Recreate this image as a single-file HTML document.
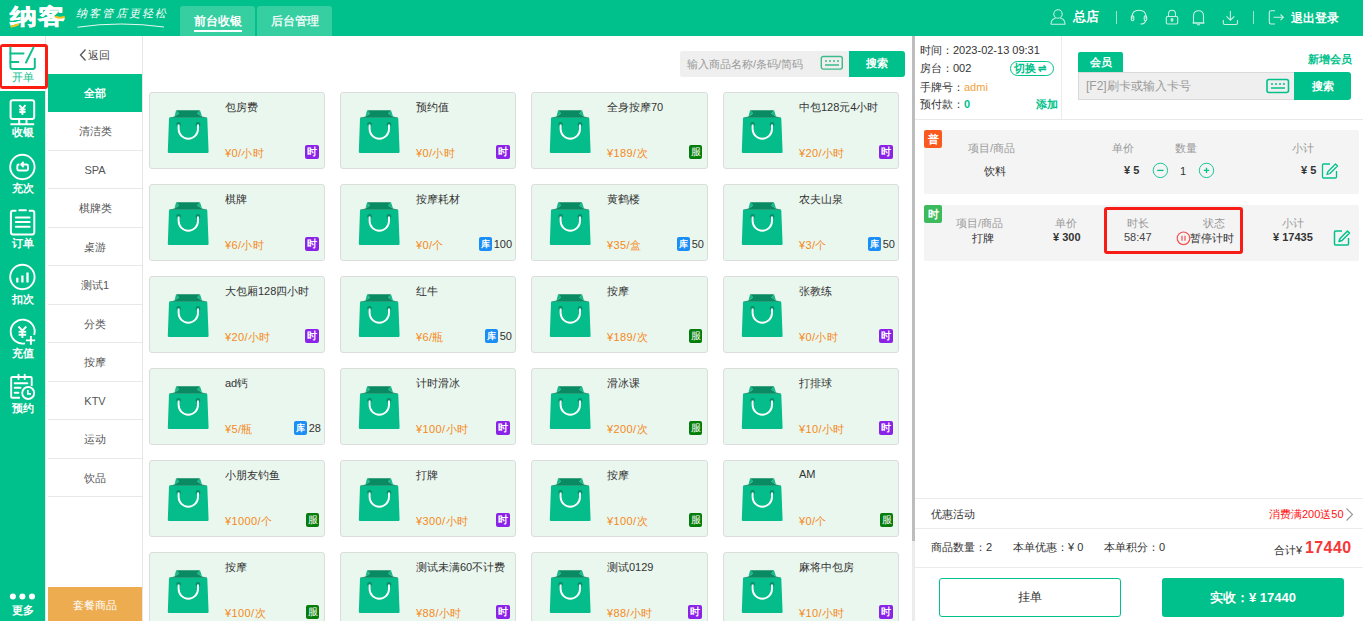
<!DOCTYPE html>
<html><head><meta charset="utf-8"><style>
*{margin:0;padding:0;box-sizing:border-box}
html,body{width:1363px;height:621px;overflow:hidden;background:#fff;font-family:"Liberation Sans",sans-serif;color:#333}
.a{position:absolute}
#hdr{position:absolute;left:0;top:0;width:1363px;height:36px;background:#00c18b}
.tab{position:absolute;top:6px;height:30px;width:75px;background:#36cfa2;border-radius:3px 3px 0 0;color:#fff;font-size:12px;text-align:center;line-height:30px}
#nav{position:absolute;left:0;top:91px;width:45px;height:530px;background:#00c18b}
.ni{position:absolute;left:0;width:45px;color:#fff;font-size:11px;text-align:center;font-weight:bold}
#catcol{position:absolute;left:45px;top:36px;width:98px;height:585px;background:#fff;border-left:1.5px solid #e6e6e6;border-right:1px solid #e6e6e6}
.cat{position:absolute;left:48px;width:94px;height:38.5px;border-bottom:1px solid #e8e8e8;font-size:11px;color:#555;text-align:center;line-height:38px}
.card{position:absolute;width:176px;height:77px;background:#eaf7ee;border:1px solid #dcdcdc;border-radius:3px}
.bag{position:absolute;left:14px;top:13px}
.pn{position:absolute;left:75px;top:7px;font-size:11px;color:#333;white-space:nowrap}
.pp{position:absolute;left:75px;top:53px;font-size:11px;color:#f5891b;white-space:nowrap;letter-spacing:0.4px}
.tag{display:inline-block;width:14px;height:14px;border-radius:2px;color:#fff;font-size:10px;line-height:14px;text-align:center;font-weight:bold}
.card>.tag{position:absolute;right:5px;top:52px}
.tp{background:#8b22e8} .tg{background:#067d0b;font-weight:normal;width:13px} .tb{background:#1b8ef5}
.stk{position:absolute;right:3px;top:52px;font-size:11px;color:#333;line-height:15px;white-space:nowrap}
.stk .tag{margin-right:2px;vertical-align:top;width:13px;font-size:9px}
#rp{position:absolute;left:912px;top:36px;width:451px;height:585px;background:#fff}
.t11{font-size:11px;white-space:nowrap}
</style></head><body>
<div id="hdr">
  <div class="a" style="left:10px;top:3px;font-size:24px;line-height:28px;font-weight:bold;color:#fff;letter-spacing:1px;transform:scale(1.1,0.9);transform-origin:0 50%;-webkit-text-stroke:0.6px #fff">纳客</div>
  <svg class="a" style="left:0;top:0" width="180" height="36"><path d="M11.5 26.5Q15 26 18 24.5" stroke="#f6c21c" stroke-width="2" fill="none" stroke-linecap="round"/><path d="M56 17Q60 18.5 64 17" stroke="#f6c21c" stroke-width="2" fill="none" stroke-linecap="round"/><path d="M77.5 27.2Q120 21 164 27" stroke="#e6f7ef" stroke-width="1.1" fill="none"/></svg>
  <div class="a" style="left:76px;top:6px;font-size:11px;color:#fff;font-family:'Liberation Serif',serif;letter-spacing:2.2px;font-style:italic">纳客管店更轻松</div>
  <div class="tab" style="left:180px;font-weight:bold">前台收银<div class="a" style="left:14px;top:24px;width:48px;height:1.6px;background:#fff"></div></div>
  <div class="tab" style="left:257px;-webkit-text-stroke:0.25px #fff">后台管理</div>
  <svg class="a" style="left:1048px;top:8px" width="20" height="18" viewBox="1048 8 20 18"><g fill="none" stroke="#c9f1e2" stroke-width="1.1"><circle cx="1058" cy="14" r="4.2"/><path d="M1051 24.3Q1051 18.8 1055.6 18.2M1060.4 18.2Q1065 18.8 1065 24.3H1051"/></g></svg>
  <div class="a" style="left:1073px;top:8px;font-size:13px;color:#fff;font-weight:bold">总店</div>
  <div class="a" style="left:1116px;top:11px;width:1px;height:13px;background:#9ee3c9"></div>
  <svg class="a" style="left:1128px;top:8px" width="22" height="18" viewBox="1128 8 22 18"><g fill="none" stroke="#c9f1e2" stroke-width="1.1"><path d="M1132 19V17Q1132 10.2 1139 10.2Q1146 10.2 1146 17V19"/><rect x="1131.3" y="15.8" width="2.5" height="5" rx="1.2"/><rect x="1144.2" y="15.8" width="2.5" height="5" rx="1.2"/><path d="M1145.5 20.8Q1145 24 1140.5 24"/></g></svg>
  <svg class="a" style="left:1163px;top:8px" width="18" height="18" viewBox="1163 8 18 18"><g fill="none" stroke="#c9f1e2" stroke-width="1.1"><path d="M1168.5 16.5V14Q1168.5 10.2 1172 10.2Q1175.5 10.2 1175.5 14V16.5"/><rect x="1166.3" y="16.5" width="11.4" height="7.5" rx="1.2"/><circle cx="1172" cy="19.6" r="1"/><path d="M1172 20.6V22"/></g></svg>
  <svg class="a" style="left:1190px;top:8px" width="18" height="18" viewBox="1190 8 18 18"><g fill="none" stroke="#c9f1e2" stroke-width="1.1"><path d="M1193.5 23V16Q1193.5 10.8 1198.5 10.8Q1203.5 10.8 1203.5 16V23Z"/><path d="M1192.5 23H1204.5M1197 24.4Q1198.5 25.6 1200 24.4"/></g></svg>
  <svg class="a" style="left:1220px;top:8px" width="20" height="18" viewBox="1220 8 20 18"><g fill="none" stroke="#c9f1e2" stroke-width="1.1"><path d="M1230.4 11V20M1226.5 16.3L1230.4 20.2L1234.3 16.3M1223.3 20V23Q1223.3 24.5 1224.8 24.5H1236Q1237.5 24.5 1237.5 23V20"/></g></svg>
  <div class="a" style="left:1253px;top:11px;width:1px;height:13px;background:#9ee3c9"></div>
  <svg class="a" style="left:1266px;top:8px" width="20" height="18" viewBox="1266 8 20 18"><g fill="none" stroke="#c9f1e2" stroke-width="1.1"><path d="M1275 10.8H1271Q1269.3 10.8 1269.3 12.5V22.3Q1269.3 24 1271 24H1275"/><path d="M1273.5 17.3H1283.3M1280.5 14.5L1283.3 17.3L1280.5 20.1"/></g></svg>
  <div class="a" style="left:1291px;top:10px;font-size:12px;color:#fff;font-weight:bold">退出登录</div>
</div>
<div id="nav"></div>
<div class="a" style="left:0;top:44px;width:48px;height:45px;background:#fff;border:3px solid #fb1d12;border-left-width:2.5px;border-radius:3px;z-index:5"></div>
<svg class="a" style="left:0;top:40px;z-index:6" width="45" height="35" viewBox="0 40 45 35"><g fill="none" stroke="#0fbf8c" stroke-width="2" stroke-linecap="round" stroke-linejoin="round"><path d="M10.4 47.5V67Q10.4 69 12.4 69H32.8Q34.8 69 34.8 67V58.8"/><path d="M10.4 53.4H23.5M10.4 62H18.3M33.4 47.6L26 62.5"/></g></svg>
<div class="ni" style="top:70px;color:#0fbf8c;z-index:6;font-weight:normal">开单</div>
<svg class="a" style="left:0;top:95px" width="45" height="32" viewBox="0 95 45 32"><g fill="none" stroke="#fff" stroke-width="2"><rect x="10.6" y="100.2" width="23.6" height="18.8" rx="2.2"/><path d="M19.2 119.5V124M26.5 119.5V124M10.4 124.2H34.2"/><path d="M19.3 105.2L22.4 108.6L25.5 105.2M22.4 108.6V114.8M19.3 109.4H25.5M19.3 112H25.5" stroke-width="2"/></g></svg>
<div class="ni" style="top:125px">收银</div>
<svg class="a" style="left:0;top:150px" width="45" height="32" viewBox="0 150 45 32"><g fill="none" stroke="#fff" stroke-width="1.9"><circle cx="22.4" cy="167" r="12.2"/><path d="M19.4 164.5H18.8Q17.3 164.5 17.3 166V169Q17.3 170.5 18.8 170.5H26.5Q28 170.5 28 169V166Q28 164.5 26.5 164.5H21.6M23.6 161.9L21.2 164.5L23.6 167.1" stroke-width="1.9" stroke-linejoin="round"/></g></svg>
<div class="ni" style="top:181px">充次</div>
<svg class="a" style="left:0;top:205px" width="45" height="32" viewBox="0 205 45 32"><g fill="none" stroke="#fff" stroke-width="2"><path d="M16.4 210.8H13Q10.9 210.8 10.9 212.9V232.3Q10.9 234.4 13 234.4H32.2Q34.3 234.4 34.3 232.3V212.9Q34.3 210.8 32.2 210.8H28.8"/><path d="M19.3 210.2H25.9M15.8 217.4H29.6M15.8 222H29.6M15.8 226.7H29.6" stroke-linecap="round"/></g></svg>
<div class="ni" style="top:236px">订单</div>
<svg class="a" style="left:0;top:260px" width="45" height="32" viewBox="0 260 45 32"><g fill="none" stroke="#fff"><circle cx="22.4" cy="277" r="12.2" stroke-width="1.9"/><path d="M17.3 277.8V282.4M22.4 275.5V282.4M27.5 272.4V282.4" stroke-width="2.3"/></g></svg>
<div class="ni" style="top:292px">扣次</div>
<svg class="a" style="left:0;top:315px" width="45" height="32" viewBox="0 315 45 32"><g fill="none" stroke="#fff" stroke-width="1.9"><path d="M25 343.4A12 12 0 1 1 34.2 335"/><path d="M18.5 326.5L22.4 330.6L26.3 326.5M22.4 330.6V338M18.6 331.8H26.2M18.6 334.7H26.2M25.9 340.4H35.2M30.9 335.9V344.8"/></g></svg>
<div class="ni" style="top:346px">充值</div>
<svg class="a" style="left:0;top:370px" width="45" height="32" viewBox="0 370 45 32"><g fill="none" stroke="#fff" stroke-width="1.9"><path d="M20 397.8H12.2Q11.2 397.8 11.2 396.8V378Q11.2 377 12.2 377H30.7Q31.7 377 31.7 378V386"/><path d="M18.5 374.6V379M24.7 374.6V379M14.7 383.2H27.4M14.7 387.8H20.5M14.7 392.8H18.5" stroke-linecap="round"/><circle cx="28.2" cy="393" r="6"/><path d="M27.8 390V393.8H31" stroke-width="1.7"/></g></svg>
<div class="ni" style="top:400.5px">预约</div>
<svg class="a" style="left:0;top:590px" width="45" height="12"><circle cx="12.9" cy="6.5" r="3" fill="#fff"/><circle cx="22.4" cy="6.5" r="3" fill="#fff"/><circle cx="32" cy="6.5" r="3" fill="#fff"/></svg>
<div class="ni" style="top:603px">更多</div>
<div id="catcol"></div>
<svg class="a" style="left:78px;top:48px" width="10" height="14"><path d="M7.5 1.5L2.5 7L7.5 12.5" fill="none" stroke="#555" stroke-width="1.3"/></svg><div class="a t11" style="left:88px;top:48px;color:#444">返回</div>
<div class="a" style="left:48px;top:74px;width:94px;height:38px;background:#00c18b;color:#fff;font-size:11px;text-align:center;line-height:38px;font-weight:bold">全部</div>
<div class="cat" style="top:112.00px">清洁类</div><div class="cat" style="top:150.53px">SPA</div><div class="cat" style="top:189.06px">棋牌类</div><div class="cat" style="top:227.59px">桌游</div><div class="cat" style="top:266.12px">测试1</div><div class="cat" style="top:304.65px">分类</div><div class="cat" style="top:343.18px">按摩</div><div class="cat" style="top:381.71px">KTV</div><div class="cat" style="top:420.24px">运动</div><div class="cat" style="top:458.77px">饮品</div>
<div class="a" style="left:48px;top:587px;width:94px;height:34px;background:#edac50;color:#fff;font-size:11px;text-align:center;line-height:36px">套餐商品</div>
<div class="a" style="left:680px;top:51px;width:169px;height:26px;background:#efefef;border-radius:2px 0 0 2px"></div>
<div class="a t11" style="left:687px;top:57px;color:#999">输入商品名称/条码/简码</div>
<svg class="a" style="left:820px;top:55px" width="24" height="16" viewBox="0 0 24 16"><rect x="1.3" y="1.5" width="21" height="12.6" rx="2" fill="none" stroke="#3dbb8c" stroke-width="1.4"/><path d="M5 6h2M9 6h2M13 6h2M17 6h2M5 10h14" stroke="#3dbb8c" stroke-width="1.3"/></svg>
<div class="a" style="left:849px;top:51px;width:56px;height:26px;background:#00c18b;border-radius:0 3px 3px 0;color:#fff;font-size:11px;text-align:center;line-height:25px;font-weight:bold">搜索</div>
<div class="card" style="left:149px;top:92px;width:176px"><svg class="bag" width="48" height="52" viewBox="0 0 48 52"><path d="M6 11.6H42.3Q43.3 11.6 43.3 12.7L44.6 45.7Q44.6 46.9 43.4 46.9H5Q3.8 46.9 3.8 45.7L5 12.7Q5 11.6 6 11.6Z" fill="#05bd8a"/><path d="M12.1 4.2H36L33.3 7.5L38 10.5L43.5 11.8H4.7L10.5 10.5L15 7.5Z" fill="#0a8a62"/><path d="M12.1 4.2L15 7.5L10.5 10.5Z M36 4.2L33.3 7.5L38 10.5Z" fill="#10b987"/><circle cx="14.6" cy="18.2" r="2.3" fill="#078f68"/><circle cx="34" cy="18.2" r="2.3" fill="#078f68"/><path d="M14.6 18.5V23A9.7 9.7 0 0 0 34 23V18.5" fill="none" stroke="#fff" stroke-width="1.9"/></svg><div class="pn">包房费</div><div class="pp">¥0/小时</div><span class="tag tp">时</span></div><div class="card" style="left:340px;top:92px;width:176px"><svg class="bag" width="48" height="52" viewBox="0 0 48 52"><path d="M6 11.6H42.3Q43.3 11.6 43.3 12.7L44.6 45.7Q44.6 46.9 43.4 46.9H5Q3.8 46.9 3.8 45.7L5 12.7Q5 11.6 6 11.6Z" fill="#05bd8a"/><path d="M12.1 4.2H36L33.3 7.5L38 10.5L43.5 11.8H4.7L10.5 10.5L15 7.5Z" fill="#0a8a62"/><path d="M12.1 4.2L15 7.5L10.5 10.5Z M36 4.2L33.3 7.5L38 10.5Z" fill="#10b987"/><circle cx="14.6" cy="18.2" r="2.3" fill="#078f68"/><circle cx="34" cy="18.2" r="2.3" fill="#078f68"/><path d="M14.6 18.5V23A9.7 9.7 0 0 0 34 23V18.5" fill="none" stroke="#fff" stroke-width="1.9"/></svg><div class="pn">预约值</div><div class="pp">¥0/小时</div><span class="tag tp">时</span></div><div class="card" style="left:531px;top:92px;width:177px"><svg class="bag" width="48" height="52" viewBox="0 0 48 52"><path d="M6 11.6H42.3Q43.3 11.6 43.3 12.7L44.6 45.7Q44.6 46.9 43.4 46.9H5Q3.8 46.9 3.8 45.7L5 12.7Q5 11.6 6 11.6Z" fill="#05bd8a"/><path d="M12.1 4.2H36L33.3 7.5L38 10.5L43.5 11.8H4.7L10.5 10.5L15 7.5Z" fill="#0a8a62"/><path d="M12.1 4.2L15 7.5L10.5 10.5Z M36 4.2L33.3 7.5L38 10.5Z" fill="#10b987"/><circle cx="14.6" cy="18.2" r="2.3" fill="#078f68"/><circle cx="34" cy="18.2" r="2.3" fill="#078f68"/><path d="M14.6 18.5V23A9.7 9.7 0 0 0 34 23V18.5" fill="none" stroke="#fff" stroke-width="1.9"/></svg><div class="pn">全身按摩70</div><div class="pp">¥189/次</div><span class="tag tg">服</span></div><div class="card" style="left:723px;top:92px;width:176px"><svg class="bag" width="48" height="52" viewBox="0 0 48 52"><path d="M6 11.6H42.3Q43.3 11.6 43.3 12.7L44.6 45.7Q44.6 46.9 43.4 46.9H5Q3.8 46.9 3.8 45.7L5 12.7Q5 11.6 6 11.6Z" fill="#05bd8a"/><path d="M12.1 4.2H36L33.3 7.5L38 10.5L43.5 11.8H4.7L10.5 10.5L15 7.5Z" fill="#0a8a62"/><path d="M12.1 4.2L15 7.5L10.5 10.5Z M36 4.2L33.3 7.5L38 10.5Z" fill="#10b987"/><circle cx="14.6" cy="18.2" r="2.3" fill="#078f68"/><circle cx="34" cy="18.2" r="2.3" fill="#078f68"/><path d="M14.6 18.5V23A9.7 9.7 0 0 0 34 23V18.5" fill="none" stroke="#fff" stroke-width="1.9"/></svg><div class="pn">中包128元4小时</div><div class="pp">¥20/小时</div><span class="tag tp">时</span></div><div class="card" style="left:149px;top:184px;width:176px"><svg class="bag" width="48" height="52" viewBox="0 0 48 52"><path d="M6 11.6H42.3Q43.3 11.6 43.3 12.7L44.6 45.7Q44.6 46.9 43.4 46.9H5Q3.8 46.9 3.8 45.7L5 12.7Q5 11.6 6 11.6Z" fill="#05bd8a"/><path d="M12.1 4.2H36L33.3 7.5L38 10.5L43.5 11.8H4.7L10.5 10.5L15 7.5Z" fill="#0a8a62"/><path d="M12.1 4.2L15 7.5L10.5 10.5Z M36 4.2L33.3 7.5L38 10.5Z" fill="#10b987"/><circle cx="14.6" cy="18.2" r="2.3" fill="#078f68"/><circle cx="34" cy="18.2" r="2.3" fill="#078f68"/><path d="M14.6 18.5V23A9.7 9.7 0 0 0 34 23V18.5" fill="none" stroke="#fff" stroke-width="1.9"/></svg><div class="pn">棋牌</div><div class="pp">¥6/小时</div><span class="tag tp">时</span></div><div class="card" style="left:340px;top:184px;width:176px"><svg class="bag" width="48" height="52" viewBox="0 0 48 52"><path d="M6 11.6H42.3Q43.3 11.6 43.3 12.7L44.6 45.7Q44.6 46.9 43.4 46.9H5Q3.8 46.9 3.8 45.7L5 12.7Q5 11.6 6 11.6Z" fill="#05bd8a"/><path d="M12.1 4.2H36L33.3 7.5L38 10.5L43.5 11.8H4.7L10.5 10.5L15 7.5Z" fill="#0a8a62"/><path d="M12.1 4.2L15 7.5L10.5 10.5Z M36 4.2L33.3 7.5L38 10.5Z" fill="#10b987"/><circle cx="14.6" cy="18.2" r="2.3" fill="#078f68"/><circle cx="34" cy="18.2" r="2.3" fill="#078f68"/><path d="M14.6 18.5V23A9.7 9.7 0 0 0 34 23V18.5" fill="none" stroke="#fff" stroke-width="1.9"/></svg><div class="pn">按摩耗材</div><div class="pp">¥0/个</div><span class="stk"><span class="tag tb">库</span>100</span></div><div class="card" style="left:531px;top:184px;width:177px"><svg class="bag" width="48" height="52" viewBox="0 0 48 52"><path d="M6 11.6H42.3Q43.3 11.6 43.3 12.7L44.6 45.7Q44.6 46.9 43.4 46.9H5Q3.8 46.9 3.8 45.7L5 12.7Q5 11.6 6 11.6Z" fill="#05bd8a"/><path d="M12.1 4.2H36L33.3 7.5L38 10.5L43.5 11.8H4.7L10.5 10.5L15 7.5Z" fill="#0a8a62"/><path d="M12.1 4.2L15 7.5L10.5 10.5Z M36 4.2L33.3 7.5L38 10.5Z" fill="#10b987"/><circle cx="14.6" cy="18.2" r="2.3" fill="#078f68"/><circle cx="34" cy="18.2" r="2.3" fill="#078f68"/><path d="M14.6 18.5V23A9.7 9.7 0 0 0 34 23V18.5" fill="none" stroke="#fff" stroke-width="1.9"/></svg><div class="pn">黄鹤楼</div><div class="pp">¥35/盒</div><span class="stk"><span class="tag tb">库</span>50</span></div><div class="card" style="left:723px;top:184px;width:176px"><svg class="bag" width="48" height="52" viewBox="0 0 48 52"><path d="M6 11.6H42.3Q43.3 11.6 43.3 12.7L44.6 45.7Q44.6 46.9 43.4 46.9H5Q3.8 46.9 3.8 45.7L5 12.7Q5 11.6 6 11.6Z" fill="#05bd8a"/><path d="M12.1 4.2H36L33.3 7.5L38 10.5L43.5 11.8H4.7L10.5 10.5L15 7.5Z" fill="#0a8a62"/><path d="M12.1 4.2L15 7.5L10.5 10.5Z M36 4.2L33.3 7.5L38 10.5Z" fill="#10b987"/><circle cx="14.6" cy="18.2" r="2.3" fill="#078f68"/><circle cx="34" cy="18.2" r="2.3" fill="#078f68"/><path d="M14.6 18.5V23A9.7 9.7 0 0 0 34 23V18.5" fill="none" stroke="#fff" stroke-width="1.9"/></svg><div class="pn">农夫山泉</div><div class="pp">¥3/个</div><span class="stk"><span class="tag tb">库</span>50</span></div><div class="card" style="left:149px;top:276px;width:176px"><svg class="bag" width="48" height="52" viewBox="0 0 48 52"><path d="M6 11.6H42.3Q43.3 11.6 43.3 12.7L44.6 45.7Q44.6 46.9 43.4 46.9H5Q3.8 46.9 3.8 45.7L5 12.7Q5 11.6 6 11.6Z" fill="#05bd8a"/><path d="M12.1 4.2H36L33.3 7.5L38 10.5L43.5 11.8H4.7L10.5 10.5L15 7.5Z" fill="#0a8a62"/><path d="M12.1 4.2L15 7.5L10.5 10.5Z M36 4.2L33.3 7.5L38 10.5Z" fill="#10b987"/><circle cx="14.6" cy="18.2" r="2.3" fill="#078f68"/><circle cx="34" cy="18.2" r="2.3" fill="#078f68"/><path d="M14.6 18.5V23A9.7 9.7 0 0 0 34 23V18.5" fill="none" stroke="#fff" stroke-width="1.9"/></svg><div class="pn">大包厢128四小时</div><div class="pp">¥20/小时</div><span class="tag tp">时</span></div><div class="card" style="left:340px;top:276px;width:176px"><svg class="bag" width="48" height="52" viewBox="0 0 48 52"><path d="M6 11.6H42.3Q43.3 11.6 43.3 12.7L44.6 45.7Q44.6 46.9 43.4 46.9H5Q3.8 46.9 3.8 45.7L5 12.7Q5 11.6 6 11.6Z" fill="#05bd8a"/><path d="M12.1 4.2H36L33.3 7.5L38 10.5L43.5 11.8H4.7L10.5 10.5L15 7.5Z" fill="#0a8a62"/><path d="M12.1 4.2L15 7.5L10.5 10.5Z M36 4.2L33.3 7.5L38 10.5Z" fill="#10b987"/><circle cx="14.6" cy="18.2" r="2.3" fill="#078f68"/><circle cx="34" cy="18.2" r="2.3" fill="#078f68"/><path d="M14.6 18.5V23A9.7 9.7 0 0 0 34 23V18.5" fill="none" stroke="#fff" stroke-width="1.9"/></svg><div class="pn">红牛</div><div class="pp">¥6/瓶</div><span class="stk"><span class="tag tb">库</span>50</span></div><div class="card" style="left:531px;top:276px;width:177px"><svg class="bag" width="48" height="52" viewBox="0 0 48 52"><path d="M6 11.6H42.3Q43.3 11.6 43.3 12.7L44.6 45.7Q44.6 46.9 43.4 46.9H5Q3.8 46.9 3.8 45.7L5 12.7Q5 11.6 6 11.6Z" fill="#05bd8a"/><path d="M12.1 4.2H36L33.3 7.5L38 10.5L43.5 11.8H4.7L10.5 10.5L15 7.5Z" fill="#0a8a62"/><path d="M12.1 4.2L15 7.5L10.5 10.5Z M36 4.2L33.3 7.5L38 10.5Z" fill="#10b987"/><circle cx="14.6" cy="18.2" r="2.3" fill="#078f68"/><circle cx="34" cy="18.2" r="2.3" fill="#078f68"/><path d="M14.6 18.5V23A9.7 9.7 0 0 0 34 23V18.5" fill="none" stroke="#fff" stroke-width="1.9"/></svg><div class="pn">按摩</div><div class="pp">¥189/次</div><span class="tag tg">服</span></div><div class="card" style="left:723px;top:276px;width:176px"><svg class="bag" width="48" height="52" viewBox="0 0 48 52"><path d="M6 11.6H42.3Q43.3 11.6 43.3 12.7L44.6 45.7Q44.6 46.9 43.4 46.9H5Q3.8 46.9 3.8 45.7L5 12.7Q5 11.6 6 11.6Z" fill="#05bd8a"/><path d="M12.1 4.2H36L33.3 7.5L38 10.5L43.5 11.8H4.7L10.5 10.5L15 7.5Z" fill="#0a8a62"/><path d="M12.1 4.2L15 7.5L10.5 10.5Z M36 4.2L33.3 7.5L38 10.5Z" fill="#10b987"/><circle cx="14.6" cy="18.2" r="2.3" fill="#078f68"/><circle cx="34" cy="18.2" r="2.3" fill="#078f68"/><path d="M14.6 18.5V23A9.7 9.7 0 0 0 34 23V18.5" fill="none" stroke="#fff" stroke-width="1.9"/></svg><div class="pn">张教练</div><div class="pp">¥0/小时</div><span class="tag tp">时</span></div><div class="card" style="left:149px;top:368px;width:176px"><svg class="bag" width="48" height="52" viewBox="0 0 48 52"><path d="M6 11.6H42.3Q43.3 11.6 43.3 12.7L44.6 45.7Q44.6 46.9 43.4 46.9H5Q3.8 46.9 3.8 45.7L5 12.7Q5 11.6 6 11.6Z" fill="#05bd8a"/><path d="M12.1 4.2H36L33.3 7.5L38 10.5L43.5 11.8H4.7L10.5 10.5L15 7.5Z" fill="#0a8a62"/><path d="M12.1 4.2L15 7.5L10.5 10.5Z M36 4.2L33.3 7.5L38 10.5Z" fill="#10b987"/><circle cx="14.6" cy="18.2" r="2.3" fill="#078f68"/><circle cx="34" cy="18.2" r="2.3" fill="#078f68"/><path d="M14.6 18.5V23A9.7 9.7 0 0 0 34 23V18.5" fill="none" stroke="#fff" stroke-width="1.9"/></svg><div class="pn">ad钙</div><div class="pp">¥5/瓶</div><span class="stk"><span class="tag tb">库</span>28</span></div><div class="card" style="left:340px;top:368px;width:176px"><svg class="bag" width="48" height="52" viewBox="0 0 48 52"><path d="M6 11.6H42.3Q43.3 11.6 43.3 12.7L44.6 45.7Q44.6 46.9 43.4 46.9H5Q3.8 46.9 3.8 45.7L5 12.7Q5 11.6 6 11.6Z" fill="#05bd8a"/><path d="M12.1 4.2H36L33.3 7.5L38 10.5L43.5 11.8H4.7L10.5 10.5L15 7.5Z" fill="#0a8a62"/><path d="M12.1 4.2L15 7.5L10.5 10.5Z M36 4.2L33.3 7.5L38 10.5Z" fill="#10b987"/><circle cx="14.6" cy="18.2" r="2.3" fill="#078f68"/><circle cx="34" cy="18.2" r="2.3" fill="#078f68"/><path d="M14.6 18.5V23A9.7 9.7 0 0 0 34 23V18.5" fill="none" stroke="#fff" stroke-width="1.9"/></svg><div class="pn">计时滑冰</div><div class="pp">¥100/小时</div><span class="tag tp">时</span></div><div class="card" style="left:531px;top:368px;width:177px"><svg class="bag" width="48" height="52" viewBox="0 0 48 52"><path d="M6 11.6H42.3Q43.3 11.6 43.3 12.7L44.6 45.7Q44.6 46.9 43.4 46.9H5Q3.8 46.9 3.8 45.7L5 12.7Q5 11.6 6 11.6Z" fill="#05bd8a"/><path d="M12.1 4.2H36L33.3 7.5L38 10.5L43.5 11.8H4.7L10.5 10.5L15 7.5Z" fill="#0a8a62"/><path d="M12.1 4.2L15 7.5L10.5 10.5Z M36 4.2L33.3 7.5L38 10.5Z" fill="#10b987"/><circle cx="14.6" cy="18.2" r="2.3" fill="#078f68"/><circle cx="34" cy="18.2" r="2.3" fill="#078f68"/><path d="M14.6 18.5V23A9.7 9.7 0 0 0 34 23V18.5" fill="none" stroke="#fff" stroke-width="1.9"/></svg><div class="pn">滑冰课</div><div class="pp">¥200/次</div><span class="tag tg">服</span></div><div class="card" style="left:723px;top:368px;width:176px"><svg class="bag" width="48" height="52" viewBox="0 0 48 52"><path d="M6 11.6H42.3Q43.3 11.6 43.3 12.7L44.6 45.7Q44.6 46.9 43.4 46.9H5Q3.8 46.9 3.8 45.7L5 12.7Q5 11.6 6 11.6Z" fill="#05bd8a"/><path d="M12.1 4.2H36L33.3 7.5L38 10.5L43.5 11.8H4.7L10.5 10.5L15 7.5Z" fill="#0a8a62"/><path d="M12.1 4.2L15 7.5L10.5 10.5Z M36 4.2L33.3 7.5L38 10.5Z" fill="#10b987"/><circle cx="14.6" cy="18.2" r="2.3" fill="#078f68"/><circle cx="34" cy="18.2" r="2.3" fill="#078f68"/><path d="M14.6 18.5V23A9.7 9.7 0 0 0 34 23V18.5" fill="none" stroke="#fff" stroke-width="1.9"/></svg><div class="pn">打排球</div><div class="pp">¥10/小时</div><span class="tag tp">时</span></div><div class="card" style="left:149px;top:460px;width:176px"><svg class="bag" width="48" height="52" viewBox="0 0 48 52"><path d="M6 11.6H42.3Q43.3 11.6 43.3 12.7L44.6 45.7Q44.6 46.9 43.4 46.9H5Q3.8 46.9 3.8 45.7L5 12.7Q5 11.6 6 11.6Z" fill="#05bd8a"/><path d="M12.1 4.2H36L33.3 7.5L38 10.5L43.5 11.8H4.7L10.5 10.5L15 7.5Z" fill="#0a8a62"/><path d="M12.1 4.2L15 7.5L10.5 10.5Z M36 4.2L33.3 7.5L38 10.5Z" fill="#10b987"/><circle cx="14.6" cy="18.2" r="2.3" fill="#078f68"/><circle cx="34" cy="18.2" r="2.3" fill="#078f68"/><path d="M14.6 18.5V23A9.7 9.7 0 0 0 34 23V18.5" fill="none" stroke="#fff" stroke-width="1.9"/></svg><div class="pn">小朋友钓鱼</div><div class="pp">¥1000/个</div><span class="tag tg">服</span></div><div class="card" style="left:340px;top:460px;width:176px"><svg class="bag" width="48" height="52" viewBox="0 0 48 52"><path d="M6 11.6H42.3Q43.3 11.6 43.3 12.7L44.6 45.7Q44.6 46.9 43.4 46.9H5Q3.8 46.9 3.8 45.7L5 12.7Q5 11.6 6 11.6Z" fill="#05bd8a"/><path d="M12.1 4.2H36L33.3 7.5L38 10.5L43.5 11.8H4.7L10.5 10.5L15 7.5Z" fill="#0a8a62"/><path d="M12.1 4.2L15 7.5L10.5 10.5Z M36 4.2L33.3 7.5L38 10.5Z" fill="#10b987"/><circle cx="14.6" cy="18.2" r="2.3" fill="#078f68"/><circle cx="34" cy="18.2" r="2.3" fill="#078f68"/><path d="M14.6 18.5V23A9.7 9.7 0 0 0 34 23V18.5" fill="none" stroke="#fff" stroke-width="1.9"/></svg><div class="pn">打牌</div><div class="pp">¥300/小时</div><span class="tag tp">时</span></div><div class="card" style="left:531px;top:460px;width:177px"><svg class="bag" width="48" height="52" viewBox="0 0 48 52"><path d="M6 11.6H42.3Q43.3 11.6 43.3 12.7L44.6 45.7Q44.6 46.9 43.4 46.9H5Q3.8 46.9 3.8 45.7L5 12.7Q5 11.6 6 11.6Z" fill="#05bd8a"/><path d="M12.1 4.2H36L33.3 7.5L38 10.5L43.5 11.8H4.7L10.5 10.5L15 7.5Z" fill="#0a8a62"/><path d="M12.1 4.2L15 7.5L10.5 10.5Z M36 4.2L33.3 7.5L38 10.5Z" fill="#10b987"/><circle cx="14.6" cy="18.2" r="2.3" fill="#078f68"/><circle cx="34" cy="18.2" r="2.3" fill="#078f68"/><path d="M14.6 18.5V23A9.7 9.7 0 0 0 34 23V18.5" fill="none" stroke="#fff" stroke-width="1.9"/></svg><div class="pn">按摩</div><div class="pp">¥100/次</div><span class="tag tg">服</span></div><div class="card" style="left:723px;top:460px;width:176px"><svg class="bag" width="48" height="52" viewBox="0 0 48 52"><path d="M6 11.6H42.3Q43.3 11.6 43.3 12.7L44.6 45.7Q44.6 46.9 43.4 46.9H5Q3.8 46.9 3.8 45.7L5 12.7Q5 11.6 6 11.6Z" fill="#05bd8a"/><path d="M12.1 4.2H36L33.3 7.5L38 10.5L43.5 11.8H4.7L10.5 10.5L15 7.5Z" fill="#0a8a62"/><path d="M12.1 4.2L15 7.5L10.5 10.5Z M36 4.2L33.3 7.5L38 10.5Z" fill="#10b987"/><circle cx="14.6" cy="18.2" r="2.3" fill="#078f68"/><circle cx="34" cy="18.2" r="2.3" fill="#078f68"/><path d="M14.6 18.5V23A9.7 9.7 0 0 0 34 23V18.5" fill="none" stroke="#fff" stroke-width="1.9"/></svg><div class="pn">AM</div><div class="pp">¥0/个</div><span class="tag tg">服</span></div><div class="card" style="left:149px;top:552px;width:176px"><svg class="bag" width="48" height="52" viewBox="0 0 48 52"><path d="M6 11.6H42.3Q43.3 11.6 43.3 12.7L44.6 45.7Q44.6 46.9 43.4 46.9H5Q3.8 46.9 3.8 45.7L5 12.7Q5 11.6 6 11.6Z" fill="#05bd8a"/><path d="M12.1 4.2H36L33.3 7.5L38 10.5L43.5 11.8H4.7L10.5 10.5L15 7.5Z" fill="#0a8a62"/><path d="M12.1 4.2L15 7.5L10.5 10.5Z M36 4.2L33.3 7.5L38 10.5Z" fill="#10b987"/><circle cx="14.6" cy="18.2" r="2.3" fill="#078f68"/><circle cx="34" cy="18.2" r="2.3" fill="#078f68"/><path d="M14.6 18.5V23A9.7 9.7 0 0 0 34 23V18.5" fill="none" stroke="#fff" stroke-width="1.9"/></svg><div class="pn">按摩</div><div class="pp">¥100/次</div><span class="tag tg">服</span></div><div class="card" style="left:340px;top:552px;width:176px"><svg class="bag" width="48" height="52" viewBox="0 0 48 52"><path d="M6 11.6H42.3Q43.3 11.6 43.3 12.7L44.6 45.7Q44.6 46.9 43.4 46.9H5Q3.8 46.9 3.8 45.7L5 12.7Q5 11.6 6 11.6Z" fill="#05bd8a"/><path d="M12.1 4.2H36L33.3 7.5L38 10.5L43.5 11.8H4.7L10.5 10.5L15 7.5Z" fill="#0a8a62"/><path d="M12.1 4.2L15 7.5L10.5 10.5Z M36 4.2L33.3 7.5L38 10.5Z" fill="#10b987"/><circle cx="14.6" cy="18.2" r="2.3" fill="#078f68"/><circle cx="34" cy="18.2" r="2.3" fill="#078f68"/><path d="M14.6 18.5V23A9.7 9.7 0 0 0 34 23V18.5" fill="none" stroke="#fff" stroke-width="1.9"/></svg><div class="pn">测试未满60不计费</div><div class="pp">¥88/小时</div><span class="tag tp">时</span></div><div class="card" style="left:531px;top:552px;width:177px"><svg class="bag" width="48" height="52" viewBox="0 0 48 52"><path d="M6 11.6H42.3Q43.3 11.6 43.3 12.7L44.6 45.7Q44.6 46.9 43.4 46.9H5Q3.8 46.9 3.8 45.7L5 12.7Q5 11.6 6 11.6Z" fill="#05bd8a"/><path d="M12.1 4.2H36L33.3 7.5L38 10.5L43.5 11.8H4.7L10.5 10.5L15 7.5Z" fill="#0a8a62"/><path d="M12.1 4.2L15 7.5L10.5 10.5Z M36 4.2L33.3 7.5L38 10.5Z" fill="#10b987"/><circle cx="14.6" cy="18.2" r="2.3" fill="#078f68"/><circle cx="34" cy="18.2" r="2.3" fill="#078f68"/><path d="M14.6 18.5V23A9.7 9.7 0 0 0 34 23V18.5" fill="none" stroke="#fff" stroke-width="1.9"/></svg><div class="pn">测试0129</div><div class="pp">¥88/小时</div><span class="tag tp">时</span></div><div class="card" style="left:723px;top:552px;width:176px"><svg class="bag" width="48" height="52" viewBox="0 0 48 52"><path d="M6 11.6H42.3Q43.3 11.6 43.3 12.7L44.6 45.7Q44.6 46.9 43.4 46.9H5Q3.8 46.9 3.8 45.7L5 12.7Q5 11.6 6 11.6Z" fill="#05bd8a"/><path d="M12.1 4.2H36L33.3 7.5L38 10.5L43.5 11.8H4.7L10.5 10.5L15 7.5Z" fill="#0a8a62"/><path d="M12.1 4.2L15 7.5L10.5 10.5Z M36 4.2L33.3 7.5L38 10.5Z" fill="#10b987"/><circle cx="14.6" cy="18.2" r="2.3" fill="#078f68"/><circle cx="34" cy="18.2" r="2.3" fill="#078f68"/><path d="M14.6 18.5V23A9.7 9.7 0 0 0 34 23V18.5" fill="none" stroke="#fff" stroke-width="1.9"/></svg><div class="pn">麻将中包房</div><div class="pp">¥10/小时</div><span class="tag tp">时</span></div>
<div id="rp"></div>
<div class="a t11" style="left:920px;top:43px">时间：2023-02-13 09:31</div>
<div class="a t11" style="left:920px;top:61px">房台：002</div>
<div class="a t11" style="left:920px;top:80px">手牌号：<span style="color:#f0a23c">admi</span></div>
<div class="a t11" style="left:920px;top:97px">预付款：<span style="color:#00c18b;font-weight:bold">0</span></div>
<div class="a" style="left:1010px;top:61px;width:44px;height:15px;border:1px solid #00c18b;border-radius:8px;color:#00c18b;font-size:11px;line-height:13px;padding-left:3px;white-space:nowrap;font-weight:bold">切换<span style="font-size:10px;margin-left:2px">⇌</span></div>
<div class="a t11" style="left:1036px;top:97px;color:#00c18b;font-weight:bold">添加</div>
<div class="a" style="left:1061px;top:36px;width:1px;height:83px;background:#ececec"></div>
<div class="a" style="left:915px;top:119px;width:448px;height:1px;background:#e8e8e8"></div>
<div class="a" style="left:1078px;top:52px;width:45px;height:20px;background:#00c18b;border-radius:2px 2px 0 0;color:#fff;font-size:11px;text-align:center;line-height:20px;font-weight:bold">会员</div>
<div class="a t11" style="left:1308px;top:52px;color:#00c18b;font-weight:bold">新增会员</div>
<div class="a" style="left:1078px;top:72px;width:216px;height:28px;background:#efefef;border:1px solid #d9d9d9;border-right:none"></div>
<div class="a" style="left:1086px;top:78px;font-size:12px;color:#999;white-space:nowrap">[F2]刷卡或输入卡号</div>
<svg class="a" style="left:1266px;top:78px" width="24" height="16" viewBox="0 0 24 16"><rect x="1" y="1.5" width="21.5" height="13" rx="2" fill="none" stroke="#00c18b" stroke-width="1.6"/><path d="M5 6h2M9 6h2M13 6h2M17 6h2M5 10h14" stroke="#00c18b" stroke-width="1.5"/></svg>
<div class="a" style="left:1294px;top:72px;width:57px;height:28px;background:#00c18b;border-radius:0 3px 3px 0;color:#fff;font-size:11px;text-align:center;line-height:28px;font-weight:bold">搜索</div>

<div class="a" style="left:924px;top:130px;width:435px;height:64px;background:#f4f4f4;border-radius:2px"></div>
<div class="a" style="left:924px;top:130px;width:18px;height:18px;background:#fb5a1f;border-radius:2px;color:#fff;font-size:11px;text-align:center;line-height:18px;font-weight:bold">普</div>
<div class="a t11" style="left:968px;top:141px;color:#999">项目/商品</div>
<div class="a t11" style="left:1112px;top:141px;color:#999">单价</div>
<div class="a t11" style="left:1175px;top:141px;color:#999">数量</div>
<div class="a t11" style="left:1292px;top:141px;color:#999">小计</div>
<div class="a t11" style="left:984px;top:164px">饮料</div>
<div class="a t11" style="left:1124px;top:164px;font-weight:bold">¥ 5</div>
<svg class="a" style="left:1152px;top:162px" width="17" height="17" viewBox="0 0 17 17"><circle cx="8.4" cy="8.4" r="7.2" fill="none" stroke="#00c18b" stroke-width="0.9"/><path d="M5.2 8.4h6.4" stroke="#00c18b" stroke-width="1.3"/></svg>
<div class="a t11" style="left:1180px;top:165px">1</div>
<svg class="a" style="left:1197.5px;top:162px" width="17" height="17" viewBox="0 0 17 17"><circle cx="8.5" cy="8.4" r="7.2" fill="none" stroke="#00c18b" stroke-width="0.9"/><path d="M5.8 8.4h5.4M8.5 5.7v5.4" stroke="#00c18b" stroke-width="1.3"/></svg>
<div class="a t11" style="left:1301px;top:164px;font-weight:bold">¥ 5</div>
<svg class="a" style="left:1321px;top:162px" width="18" height="17" viewBox="0 0 18 17"><path d="M9 2H2.5Q1.5 2 1.5 3V15Q1.5 16 2.5 16H14.5Q15.5 16 15.5 15V9" fill="none" stroke="#00c18b" stroke-width="1.3"/><path d="M6 12.5L7 9.5L14.5 2L16.5 4L9 11.5Z" fill="none" stroke="#00c18b" stroke-width="1.3" stroke-linejoin="round"/></svg>

<div class="a" style="left:924px;top:205px;width:435px;height:56px;background:#f4f4f4;border-radius:2px"></div>
<div class="a" style="left:924px;top:205px;width:18px;height:18px;background:#3cbb5c;border-radius:2px;color:#fff;font-size:11px;text-align:center;line-height:18px;font-weight:bold">时</div>
<div class="a t11" style="left:956px;top:216px;color:#999">项目/商品</div>
<div class="a t11" style="left:972px;top:231px">打牌</div>
<div class="a t11" style="left:1055px;top:216px;color:#999">单价</div>
<div class="a t11" style="left:1053px;top:231px;font-weight:bold">¥ 300</div>
<div class="a" style="left:1104px;top:207px;width:139px;height:47px;border:3px solid #f71c16;border-radius:3px"></div>
<div class="a t11" style="left:1127px;top:216px;color:#999">时长</div>
<div class="a t11" style="left:1124px;top:231px;color:#444">58:47</div>
<div class="a t11" style="left:1203px;top:216px;color:#999">状态</div>
<svg class="a" style="left:1176px;top:231px" width="15" height="15" viewBox="0 0 15 15"><circle cx="7.5" cy="7.3" r="6.3" fill="none" stroke="#f45050" stroke-width="1.2"/><path d="M6 4.8v5M9 4.8v5" stroke="#f45050" stroke-width="1.2"/></svg>
<div class="a t11" style="left:1190px;top:231px">暂停计时</div>
<div class="a t11" style="left:1282px;top:216px;color:#999">小计</div>
<div class="a t11" style="left:1273px;top:231px;font-weight:bold">¥ 17435</div>
<svg class="a" style="left:1333px;top:229px" width="18" height="17" viewBox="0 0 18 17"><path d="M9 2H2.5Q1.5 2 1.5 3V15Q1.5 16 2.5 16H14.5Q15.5 16 15.5 15V9" fill="none" stroke="#00c18b" stroke-width="1.5"/><path d="M6 12.5L7 9.5L14.5 2L16.5 4L9 11.5Z" fill="none" stroke="#00c18b" stroke-width="1.5" stroke-linejoin="round"/></svg>

<div class="a" style="left:915px;top:498px;width:448px;height:1px;background:#ebebeb"></div>
<div class="a t11" style="left:931px;top:507px">优惠活动</div>
<div class="a t11" style="left:1269px;top:507px;color:#f11">消费满200送50</div>
<svg class="a" style="left:1345px;top:507px" width="10" height="15" viewBox="0 0 10 15"><path d="M1.5 1.5L7.5 7.5L1.5 13.5" fill="none" stroke="#999" stroke-width="1.1"/></svg>
<div class="a" style="left:915px;top:528px;width:448px;height:1px;background:#ebebeb"></div>
<div class="a t11" style="left:931px;top:540px">商品数量：2</div>
<div class="a t11" style="left:1013px;top:540px">本单优惠：¥ 0</div>
<div class="a t11" style="left:1104px;top:540px">本单积分：0</div>
<div class="a t11" style="left:1274px;top:543px">合计¥</div>
<div class="a" style="left:1305px;top:539px;font-size:16px;font-weight:bold;color:#f43838;white-space:nowrap;letter-spacing:0.4px">17440</div>
<div class="a" style="left:915px;top:567px;width:448px;height:1px;background:#ebebeb"></div>
<div class="a" style="left:939px;top:578px;width:182px;height:39px;border:1.5px solid #00c18b;border-radius:3px;font-size:12px;text-align:center;line-height:36px">挂单</div>
<div class="a" style="left:1162px;top:578px;width:182px;height:39px;background:#00c18b;border-radius:3px;font-size:13px;text-align:center;line-height:39px;color:#fff;font-weight:bold">实收：¥ 17440</div>

<div class="a" style="left:912px;top:36px;width:3px;height:505px;background:#bdbdbd"></div>
<div class="a" style="left:912px;top:541px;width:3px;height:80px;background:#ececec"></div>
</body></html>
